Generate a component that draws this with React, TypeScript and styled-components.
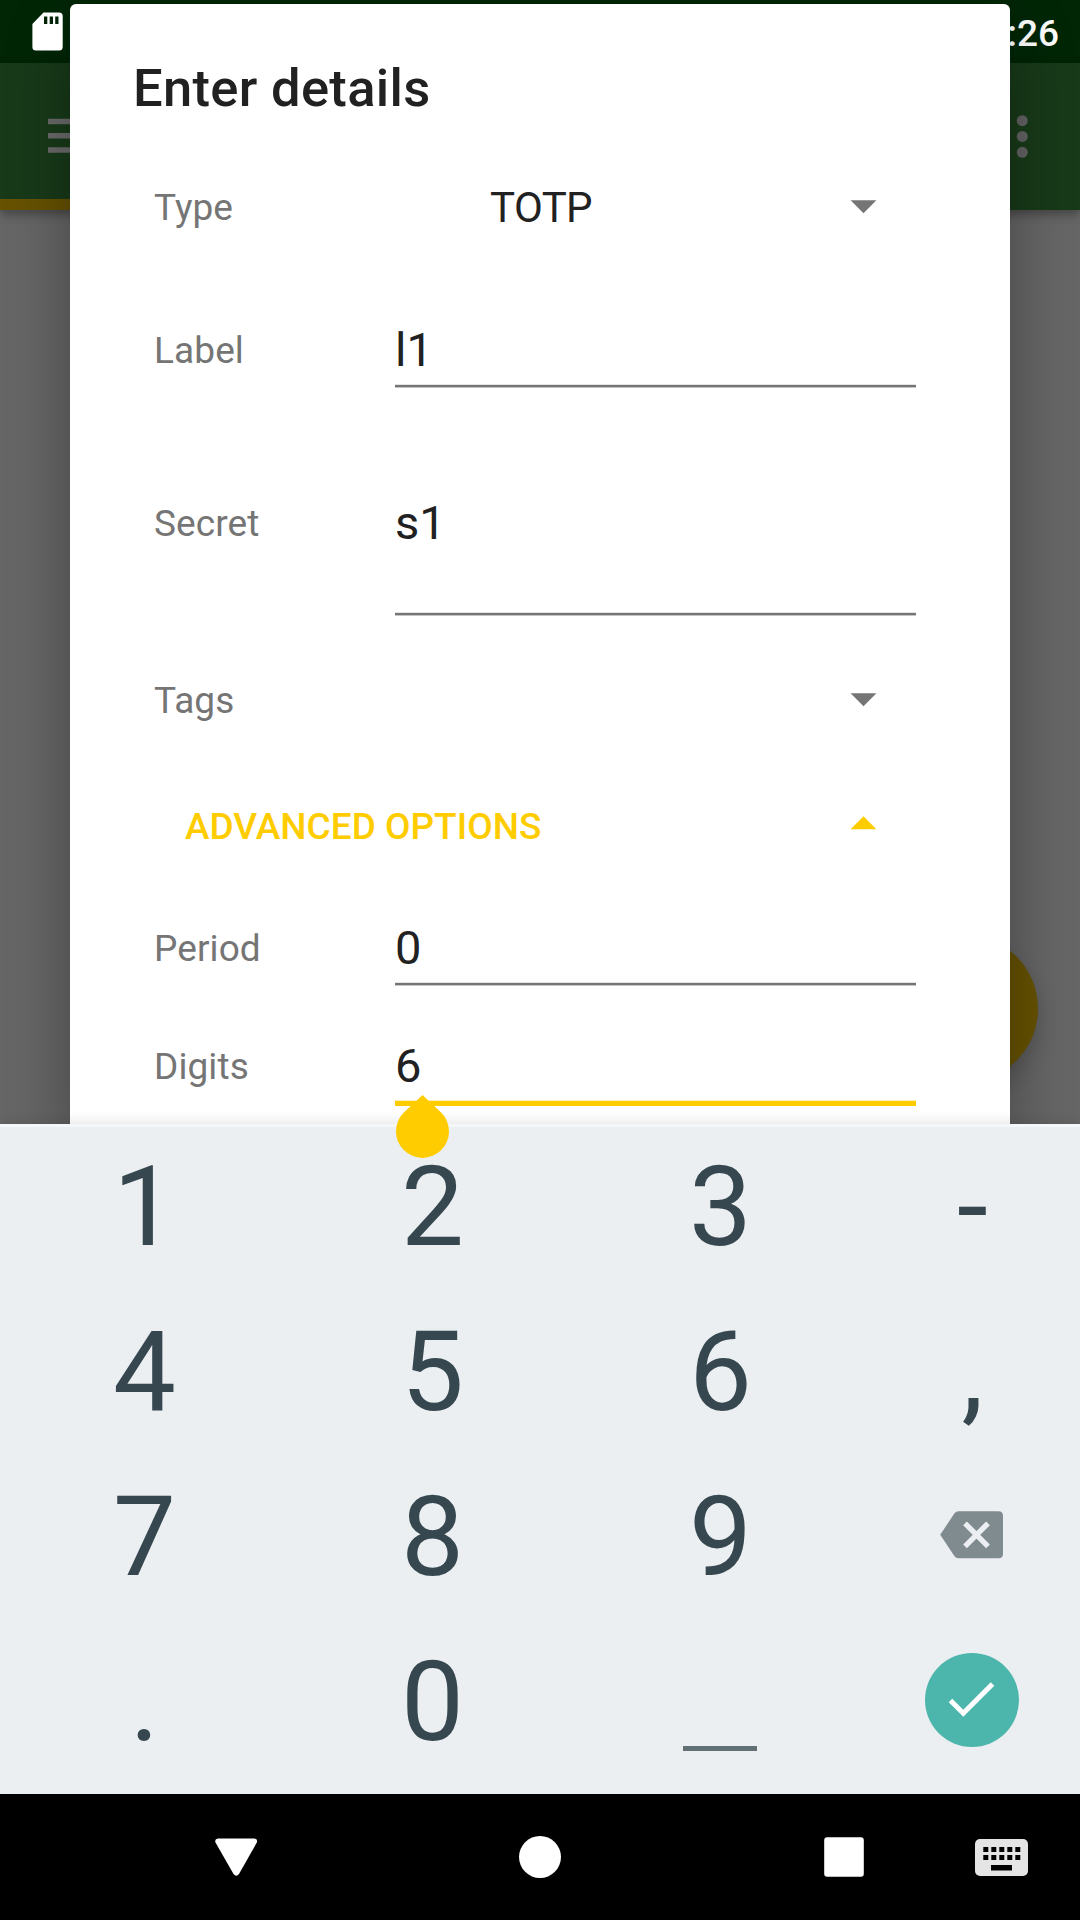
import React from "react";
import styled, { createGlobalStyle } from "styled-components";

const GlobalStyle = createGlobalStyle`
  * { box-sizing: border-box; }
  body { margin: 0; background: #666; }
`;

const accent = "#ffcc00";

const Screen = styled.div`
  position: relative;
  display: flex;
  flex-direction: column;
  width: 1080px;
  height: 1920px;
  overflow: hidden;
  font-family: Roboto, "Liberation Sans", sans-serif;
  background: #666;
`;

const StatusBar = styled.header`
  display: flex;
  flex: none;
  justify-content: space-between;
  height: 63px;
  padding: 12px 21px 0 32px;
  background: #002606;
`;

const Clock = styled.span`
  color: #fff;
  font-size: 37px;
  font-weight: 500;
  line-height: 43px;
`;

const StatusIcon = styled.svg`
  position: relative;
  z-index: 3;
`;

const AppBar = styled.div`
  position: relative;
  z-index: 1;
  display: flex;
  flex: none;
  flex-direction: column;
  height: 147px;
  background: #183a19;
  box-shadow: 0 4px 10px rgba(0, 0, 0, 0.35);
`;

const Toolbar = styled.div`
  display: flex;
  flex: 1;
  justify-content: space-between;
  padding: 52px 52px 0 48px;
`;

const TabIndicator = styled.div`
  width: 540px;
  height: 11px;
  background: #665200;
`;

const Content = styled.main`
  display: flex;
  flex: 1;
  align-items: flex-end;
  justify-content: flex-end;
  padding: 0 42px 42px 0;
`;

const Fab = styled.div`
  width: 147px;
  height: 147px;
  border-radius: 50%;
  background: #665200;
  box-shadow: 0 10px 20px rgba(0, 0, 0, 0.18);
`;

const Dialog = styled.section`
  position: absolute;
  z-index: 2;
  top: 4px;
  left: 70px;
  width: 940px;
  height: 1125px;
  border-radius: 6px 6px 0 0;
  background: #fff;
  box-shadow: 0 24px 64px rgba(0, 0, 0, 0.33);
`;

const Title = styled.h1`
  height: 167px;
  margin: 0;
  padding-left: 63px;
  color: #212121;
  font-size: 52.5px;
  font-weight: 500;
  letter-spacing: 0.32px;
  line-height: 169px;
`;

const Row = styled.div<{ $height: number }>`
  display: grid;
  grid-template-columns: 241px 521px;
  align-items: start;
  height: ${(p) => p.$height}px;
  padding-left: 84px;
`;

const Label = styled.label`
  color: #757575;
  font-size: 37px;
  letter-spacing: 0.1px;
  line-height: 74px;
`;

const Field = styled.div<{ $height: number }>`
  display: flex;
  flex-direction: column;
  justify-content: space-between;
  height: ${(p) => p.$height}px;
`;

const Value = styled.span`
  height: 66px;
  color: #212121;
  font-size: 47px;
  line-height: 72px;
`;

const Underline = styled.div<{ $focused?: boolean }>`
  flex: none;
  height: ${(p) => (p.$focused ? 6 : 4)}px;
  background: ${(p) =>
    p.$focused
      ? `linear-gradient(#fff0b8 1px, ${accent} 1px)`
      : "linear-gradient(#e4e4e4 1px, #757575 1px, #757575 3px, #c6c6c6 3px)"};
`;

const Spinner = styled.div`
  display: flex;
  align-items: center;
  justify-content: space-between;
  height: 72px;
  padding: 0 39px 0 95px;
`;

const Selection = styled.span`
  padding-top: 1px;
  color: #212121;
  font-size: 42px;
  letter-spacing: -0.6px;
  line-height: 72px;
`;

const AdvancedToggle = styled.div`
  display: flex;
  align-items: flex-start;
  justify-content: space-between;
  height: 122px;
  padding: 0 133px 0 115px;
  color: ${accent};
  font-size: 37px;
  font-weight: 500;
  line-height: 74px;

  svg {
    margin-top: 26px;
  }
`;

const Keyboard = styled.div`
  position: relative;
  z-index: 3;
  display: grid;
  flex: none;
  grid-template-columns: 288px 288px 288px 216px;
  grid-template-rows: repeat(4, 165px);
  height: 670px;
  background: linear-gradient(#f5f6f7 3px, #ebeff2 3px);
  box-shadow: 0 -2px 12px rgba(0, 0, 0, 0.11);
`;

const Key = styled.div<{ $icon?: boolean }>`
  display: flex;
  align-items: center;
  justify-content: center;
  padding-bottom: ${(p) => (p.$icon ? 3 : 0)}px;
  padding-left: ${(p) => (p.$icon ? 0 : 1)}px;
  color: #37474f;
  font-size: 112px;
  line-height: 165px;
`;

const DoneButton = styled.div`
  display: flex;
  align-items: center;
  justify-content: center;
  width: 94px;
  height: 94px;
  border-radius: 50%;
  background: #4db6ac;
`;

const SpaceMark = styled.div`
  width: 74px;
  height: 5px;
  margin-top: 97px;
  background: #607074;
`;

const CursorHandle = styled.svg`
  position: absolute;
  z-index: 4;
  top: 1095px;
  left: 396px;
`;

const NavBar = styled.nav`
  display: grid;
  flex: none;
  grid-template-columns: 388px 304px 283px 1fr;
  align-items: center;
  height: 126px;
  background: #000;
`;

const NavItem = styled.div<{ $start: number }>`
  display: flex;
  padding-left: ${(p) => p.$start}px;
`;

const Arrow = ({ up = false }: { up?: boolean }) => (
  <svg width="27" height="14" viewBox="0 0 27 14">
    <path
      d={up ? "M.6 13.300H26.400L13.500 .3Z" : "M.6 .3H26.400L13.500 13.300Z"}
      fill={up ? accent : "#757575"}
    />
  </svg>
);

const Backspace = () => (
  <svg width="64" height="48" viewBox="0 0 64 48">
    <path
      d="M18.500 .3H58.500Q63 .3 63 4.800V42.800Q63 47.300 58.500 47.300H18.500Q16 47.300 14.500 45.300L.2 23.800L14.500 2.300Q16 .3 18.500 .3Z"
      fill="#808b8f"
    />
    <path d="M25 12.300L48 35.300M48 12.300L25 35.300" stroke="#ebeff2" strokeWidth="5.300" />
  </svg>
);

const keyRows: React.ReactNode[][] = [
  ["1", "2", "3", "-"],
  ["4", "5", "6", ","],
  ["7", "8", "9"],
  [".", "0"],
];

export default function App() {
  return (
    <>
      <GlobalStyle />
      <Screen>
        <StatusBar>
          <StatusIcon width="31" height="39" viewBox="0 0 31 39">
            <path
              fillRule="evenodd"
              fill="#fff"
              d="M11.500 .5H27Q30.700 .5 30.700 4V35Q30.700 38.600 27 38.600H4Q.4 38.600 .4 35V12ZM12 4.500V12H15.300V4.500ZM17.700 4.500V12H21V4.500ZM23.200 4.500V12H26.500V4.500Z"
            />
          </StatusIcon>
          <Clock>:26</Clock>
        </StatusBar>
        <AppBar>
          <Toolbar>
            <svg width="48" height="42" viewBox="0 0 48 42">
              <path d="M0 6.500H48M0 20.700H48M0 35H48" stroke="#6a6a6a" strokeWidth="5.500" />
            </svg>
            <svg width="12" height="50" viewBox="0 0 12 50">
              <g fill="#626262">
                <circle cx="6.300" cy="5.700" r="5.500" />
                <circle cx="6.300" cy="21.400" r="5.500" />
                <circle cx="6.300" cy="37.300" r="5.500" />
              </g>
            </svg>
          </Toolbar>
          <TabIndicator />
        </AppBar>
        <Content>
          <Fab />
        </Content>

        <Dialog>
          <Title>Enter details</Title>
          <Row $height={143}>
            <Label>Type</Label>
            <Spinner>
              <Selection>TOTP</Selection>
              <Arrow />
            </Spinner>
          </Row>
          <Row $height={173}>
            <Label>Label</Label>
            <Field $height={74}>
              <Value>l1</Value>
              <Underline />
            </Field>
          </Row>
          <Row $height={177}>
            <Label>Secret</Label>
            <Field $height={129}>
              <Value>s1</Value>
              <Underline />
            </Field>
          </Row>
          <Row $height={126}>
            <Label>Tags</Label>
            <Spinner>
              <Selection />
              <Arrow />
            </Spinner>
          </Row>
          <AdvancedToggle>
            <span>ADVANCED OPTIONS</span>
            <Arrow up />
          </AdvancedToggle>
          <Row $height={118}>
            <Label>Period</Label>
            <Field $height={74}>
              <Value>0</Value>
              <Underline />
            </Field>
          </Row>
          <Row $height={94}>
            <Label>Digits</Label>
            <Field $height={76}>
              <Value>6</Value>
              <Underline $focused />
            </Field>
          </Row>
        </Dialog>

        <Keyboard>
          {keyRows.map((row, r) => (
            <React.Fragment key={r}>
              {row.map((k, c) => (
                <Key key={c}>{k}</Key>
              ))}
              {r === 2 && (
                <Key $icon>
                  <Backspace />
                </Key>
              )}
            </React.Fragment>
          ))}
          <Key $icon>
            <SpaceMark />
          </Key>
          <Key $icon>
            <DoneButton>
              <svg width="50" height="40" viewBox="0 0 50 40">
                <path
                  d="M3.500 20.500L16.300 33.200L45.500 4"
                  fill="none"
                  stroke="#fff"
                  strokeWidth="5"
                />
              </svg>
            </DoneButton>
          </Key>
        </Keyboard>

        <CursorHandle width="53" height="63" viewBox="0 0 53 63">
          <path
            d="M26.500 0L45.200 17.600A26.500 26.500 0 1 1 7.800 17.600Z"
            fill={accent}
          />
        </CursorHandle>

        <NavBar>
          <NavItem $start={215}>
            <svg width="43" height="38" viewBox="0 0 43 38">
              <path
                d="M3 .5H39.500Q43 1 41.800 4.500L24 36Q21.300 39.500 18.500 36L.5 4.500Q-.7 1 3 .5Z"
                fill="#fff"
              />
            </svg>
          </NavItem>
          <NavItem $start={131}>
            <svg width="42" height="42" viewBox="0 0 42 42">
              <circle cx="21" cy="21" r="21" fill="#fff" />
            </svg>
          </NavItem>
          <NavItem $start={132}>
            <svg width="40" height="40" viewBox="0 0 40 40">
              <rect x=".2" y=".2" width="39.600" height="39.600" rx="3" fill="#fff" />
            </svg>
          </NavItem>
          <NavItem $start={0}>
            <svg width="53" height="37" viewBox="0 0 53 37">
              <rect width="53" height="37" rx="5" fill="#e5e5e5" />
              <g fill="#000">
                {[8, 16, 24, 32, 40].map((x) => (
                  <React.Fragment key={x}>
                    <rect x={x + 0.3} y="8" width="5" height="5" />
                    <rect x={x + 0.3} y="16" width="5" height="5" />
                  </React.Fragment>
                ))}
                <rect x="16" y="26" width="21" height="5.500" />
              </g>
            </svg>
          </NavItem>
        </NavBar>
      </Screen>
    </>
  );
}
